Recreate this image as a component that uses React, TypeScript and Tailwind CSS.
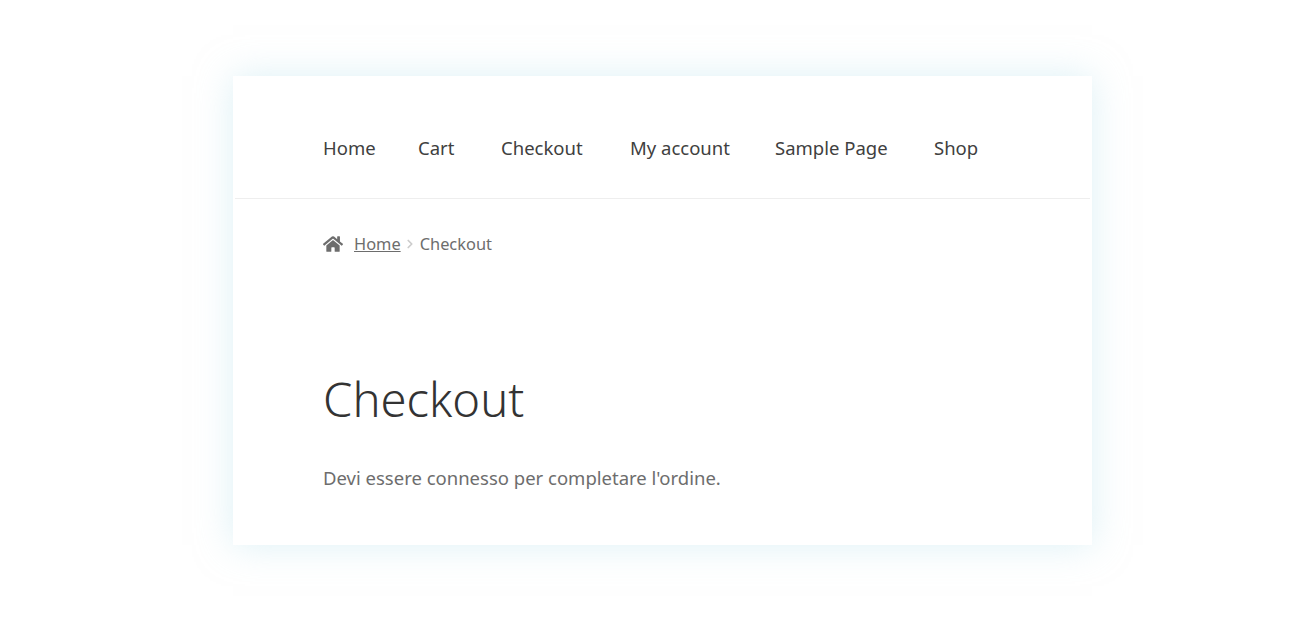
import React from 'react';
import { FaHome } from 'react-icons/fa';
import { ChevronRight } from 'lucide-react';

const navItems = [
  { label: 'Home', className: 'w-[95px]' },
  { label: 'Cart', className: 'w-[83px]' },
  { label: 'Checkout', className: 'w-[129px]' },
  { label: 'My account', className: 'w-[145px]' },
  { label: 'Sample Page', className: 'w-[159px]' },
  { label: 'Shop', className: '' },
];

export default function App() {
  return (
    <div className="min-h-[629px] w-full bg-white pt-[76px] font-['Noto_Sans',sans-serif]">
      <div className="ml-[233px] h-[469px] w-[859px] bg-white shadow-[0_0_34px_rgba(188,228,238,0.5)]">
        <header className="h-[123px] pt-[58px]">
          <nav className="flex pl-[90px] text-[18.5px] leading-[28px] text-[#404040]">
            {navItems.map((item) => (
              <a key={item.label} href="#" className={item.className}>{item.label}</a>
            ))}
          </nav>
          <div className="mx-[2px] mt-[36px] border-b border-[#eeeeee]" />
        </header>
        <main className="pl-[90px]">
          <div className="mt-[33px] flex h-[24px] items-center text-[16.4px] text-[#6d6d6d]">
            <FaHome className="mr-[11px] h-[20px] w-[20px]" />
            <a href="#" className="underline">Home</a>
            <ChevronRight className="mx-[2.5px] h-[14px] w-[14px] text-[#cccccc]" strokeWidth={3} />
            <span>Checkout</span>
          </div>
          <h1 className="mt-[112px] text-[47.2px] font-light leading-[62px] text-[#333333]">Checkout</h1>
          <p className="mt-[34px] text-[18.5px] leading-[28px] text-[#6d6d6d]">Devi essere connesso per completare l'ordine.</p>
        </main>
      </div>
    </div>
  );
}
